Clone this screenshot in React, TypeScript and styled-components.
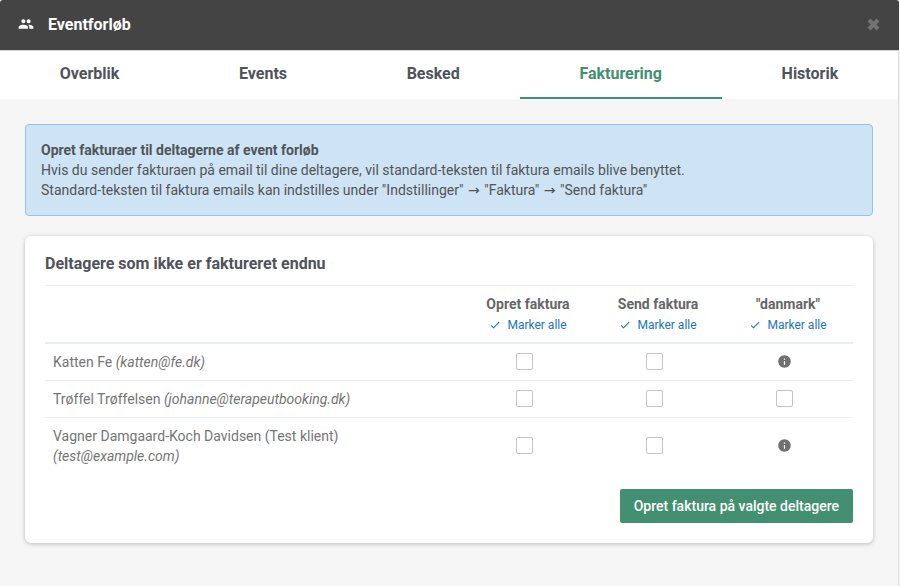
import React, { useState } from "react";
import styled, { createGlobalStyle } from "styled-components";

const GlobalStyle = createGlobalStyle`
  *, *::before, *::after { box-sizing: border-box; }
  html { background: #f6f6f6; }
  body {
    margin: 0;
    background: #f6f6f6;
    color: #50535a;
    font: 14px/20px Roboto, "Liberation Sans", sans-serif;
  }
  button { font: inherit; border: 0; cursor: pointer; }
`;

const Dialog = styled.main`
  min-height: 100vh;
  margin-right: 1px;
  border-right: 1px solid #dcdcdc;
  background: #f6f6f6;
`;

const Header = styled.header`
  display: flex;
  align-items: center;
  height: 51px;
  margin-right: -1px;
  padding: 0 19px 2px 18px;
  border-bottom: 1px solid #d5d5d5;
  border-radius: 3px 3px 0 0;
  background: #444;
  color: #fff;
`;

const HeaderTitle = styled.h1`
  flex: 1;
  margin: 0 0 0 14px;
  padding-top: 2px;
  font-size: 16px;
  font-weight: 700;
  line-height: 24px;
`;

const CloseButton = styled.button`
  display: flex;
  padding: 0;
  background: none;
  color: #727272;
`;

const Tabs = styled.nav`
  display: flex;
  background: #fff;
`;

const Tab = styled.a<{ $active?: boolean }>`
  flex: 1 1 auto;
  height: 48px;
  padding: 11px 0;
  border-bottom: 2px solid ${(p) => (p.$active ? "#428f71" : "transparent")};
  color: ${(p) => (p.$active ? "#428f71" : "#50535a")};
  font-size: 16px;
  font-weight: 700;
  line-height: 24px;
  text-align: center;
  text-decoration: none;
`;

const Content = styled.div`
  display: flex;
  flex-direction: column;
  gap: 20px;
  padding: 25px;
`;

const Notice = styled.section`
  padding: 15px;
  border: 1px solid #92c5ec;
  border-radius: 4px;
  background: #cee3f4;
  color: #50555a;

  p { margin: 0; }
`;

const Arrow = styled.span`
  padding: 0 1px;
  font-family: "DejaVu Sans", sans-serif;
  line-height: 1;
`;

const Card = styled.section`
  padding: 16px 20px 20px;
  border-radius: 6px;
  background: #fff;
  box-shadow: 0 1px 4px rgba(0, 0, 0, 0.25);
`;

const CardTitle = styled.h2`
  margin: 0;
  padding-bottom: 9px;
  border-bottom: 1px solid #e9eef1;
  font-size: 16px;
  font-weight: 700;
  line-height: 24px;
`;

const Table = styled.table`
  width: 100%;
  border-collapse: separate;
  border-spacing: 0;
  table-layout: fixed;
  color: #757575;
`;

const NameHead = styled.td`
  border-bottom: 2px solid #e9eef1;
`;

const OptionHead = styled.th`
  width: 130px;
  padding: 8px 0 7px;
  border-bottom: 2px solid #e9eef1;
  color: #666;
  font-weight: 700;
  text-align: center;
`;

const MarkAll = styled.button`
  display: flex;
  align-items: center;
  gap: 6px;
  margin: 1px auto 0;
  padding: 0;
  background: none;
  color: #1b75bc;
  font-size: 12px;
  font-weight: 400;
  line-height: 20px;
`;

const Row = styled.tr`
  &:not(:last-child) > td { border-bottom: 1px solid #e9eef1; }
`;

const NameCell = styled.td`
  padding: 8px;

  span { display: inline-block; max-width: 320px; }
`;

const OptionCell = styled.td`
  padding: 0 16px 2px 8px;

  > * { display: block; margin: 0 auto; }
`;

const Checkbox = styled.input`
  appearance: none;
  width: 17px;
  height: 17px;
  border: 1px solid #c4c4c4;
  border-radius: 2px;
  background: #fff;

  &:checked {
    background: #428f71;
    border-color: #428f71;
    box-shadow: inset 0 0 0 3px #fff;
  }
`;

const Actions = styled.div`
  display: flex;
  justify-content: flex-end;
  padding-top: 15px;
`;

const PrimaryButton = styled.button`
  padding: 7px 14px;
  border-radius: 2px;
  background: #428f71;
  color: #fff;
  font-weight: 500;
`;

const PeopleIcon = () => (
  <svg width="16" height="16" viewBox="0 0 24 24" fill="currentColor" aria-hidden="true">
    <path d="M16 11c1.66 0 2.99-1.34 2.99-3S17.66 5 16 5s-3 1.34-3 3 1.34 3 3 3zm-8 0c1.66 0 2.99-1.34 2.99-3S9.66 5 8 5 5 6.34 5 8s1.34 3 3 3zm0 2c-2.33 0-7 1.17-7 3.5V19h14v-2.5c0-2.33-4.67-3.5-7-3.5zm8 0c-.29 0-.62.02-.97.05 1.16.84 1.97 1.97 1.97 3.45V19h6v-2.5c0-2.33-4.67-3.5-7-3.5z" />
  </svg>
);

const CrossIcon = () => (
  <svg width="13" height="13" viewBox="0 0 13 13" stroke="currentColor" strokeWidth="4" aria-hidden="true">
    <path d="M2 2 11 11M11 2 2 11" />
  </svg>
);

const CheckIcon = () => (
  <svg width="12" height="12" viewBox="0 0 24 24" fill="currentColor" aria-hidden="true">
    <path d="M9 16.17 4.83 12l-1.42 1.41L9 19 21 7l-1.41-1.41z" />
  </svg>
);

const InfoIcon = () => (
  <svg width="15" height="15" viewBox="0 0 24 24" fill="#707070" role="img" aria-label="Info">
    <path d="M12 2C6.48 2 2 6.48 2 12s4.48 10 10 10 10-4.48 10-10S17.52 2 12 2zm1 15h-2v-6h2v6zm0-8h-2V7h2v2z" />
  </svg>
);

const tabs = ["Overblik", "Events", "Besked", "Fakturering", "Historik"];
const options = ["Opret faktura", "Send faktura", '"danmark"'];
const participants = [
  { name: "Katten Fe", email: "katten@fe.dk", danmark: false },
  { name: "Trøffel Trøffelsen", email: "johanne@terapeutbooking.dk", danmark: true },
  { name: "Vagner Damgaard-Koch Davidsen (Test klient)", email: "test@example.com", danmark: false },
];

export default function App() {
  const [checked, setChecked] = useState<Record<string, boolean>>({});
  const markAll = (option: string) =>
    setChecked((c) => ({
      ...c,
      ...Object.fromEntries(participants.map((p) => [p.email + option, true])),
    }));

  return (
    <>
      <GlobalStyle />
      <Dialog>
        <Header>
          <PeopleIcon />
          <HeaderTitle>Eventforløb</HeaderTitle>
          <CloseButton type="button" aria-label="Luk"><CrossIcon /></CloseButton>
        </Header>
        <Tabs>
          {tabs.map((t) => (
            <Tab key={t} href="#" $active={t === "Fakturering"}>{t}</Tab>
          ))}
        </Tabs>
        <Content>
          <Notice>
            <p><strong>Opret fakturaer til deltagerne af event forløb</strong></p>
            <p>Hvis du sender fakturaen på email til dine deltagere, vil standard-teksten til faktura emails blive benyttet.</p>
            <p>
              Standard-teksten til faktura emails kan indstilles under "Indstillinger" <Arrow>→</Arrow> "Faktura" <Arrow>→</Arrow> "Send faktura"
            </p>
          </Notice>
          <Card>
            <CardTitle>Deltagere som ikke er faktureret endnu</CardTitle>
            <Table>
              <thead>
                <tr>
                  <NameHead />
                  {options.map((o) => (
                    <OptionHead key={o} scope="col">
                      {o}
                      <MarkAll type="button" onClick={() => markAll(o)}>
                        <CheckIcon />
                        Marker alle
                      </MarkAll>
                    </OptionHead>
                  ))}
                </tr>
              </thead>
              <tbody>
                {participants.map((p) => (
                  <Row key={p.email}>
                    <NameCell><span>{p.name} <em>({p.email})</em></span></NameCell>
                    {options.map((o, i) => (
                      <OptionCell key={o}>
                        {i === 2 && !p.danmark ? (
                          <InfoIcon />
                        ) : (
                          <Checkbox
                            type="checkbox"
                            aria-label={`${o}: ${p.name}`}
                            checked={!!checked[p.email + o]}
                            onChange={(e) => setChecked({ ...checked, [p.email + o]: e.target.checked })}
                          />
                        )}
                      </OptionCell>
                    ))}
                  </Row>
                ))}
              </tbody>
            </Table>
            <Actions>
              <PrimaryButton type="button">Opret faktura på valgte deltagere</PrimaryButton>
            </Actions>
          </Card>
        </Content>
      </Dialog>
    </>
  );
}
